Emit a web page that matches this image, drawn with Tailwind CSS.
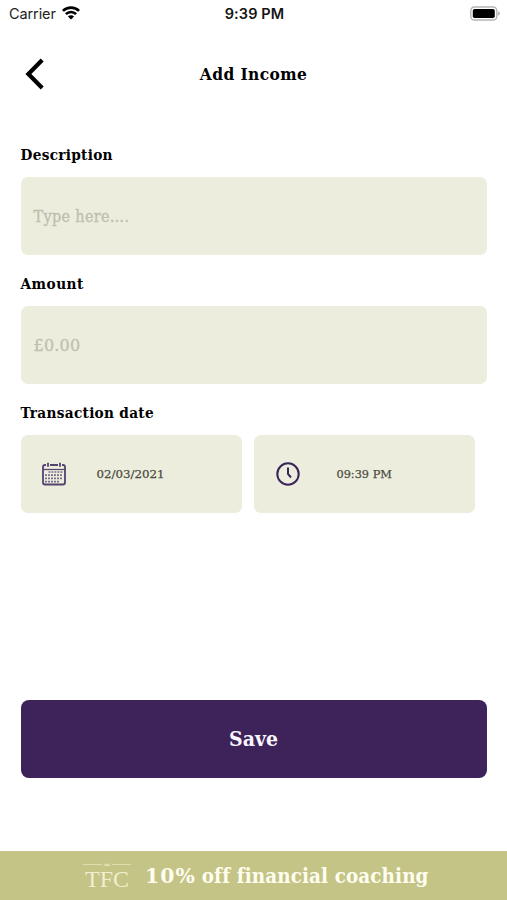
<!DOCTYPE html>
<html lang="en">
<head>
<meta charset="utf-8">
<title>Add Income</title>
<script src="https://cdn.jsdelivr.net/npm/@tailwindcss/browser@4"></script>
</head>
<body class="bg-white">
<div class="w-[507px] h-[900px] flex flex-col overflow-hidden font-['DejaVu_Serif_Condensed','DejaVu_Serif',serif] text-black whitespace-nowrap">
  <header class="h-7 shrink-0 grid grid-cols-3 items-center pl-[9px] pr-[7px] font-['Inter',sans-serif] text-[14.5px] leading-7">
    <div class="flex items-center gap-[6px] text-[#222]">
      <span class="tracking-[-0.1px]">Carrier</span>
      <svg class="w-[18px] h-[14px] -mt-[2px]" viewBox="0 0 18 14" fill="none" stroke="#000" stroke-width="2.7">
        <path d="M.9 4.9a11.5 11.5 0 0 1 16.2 0M3.9 8.1a7.2 7.2 0 0 1 10.2 0"/>
        <path d="M9 13.6 5.9 10.5a4.4 4.4 0 0 1 6.2 0z" fill="#000" stroke="none"/>
      </svg>
    </div>
    <span class="text-center font-semibold text-[#151515] tracking-[.1px]">9:39 PM</span>
    <svg class="w-[31px] h-[15px] justify-self-end -mt-[2px]" viewBox="0 0 31 15">
      <rect x="1.8" y="1" width="26" height="13" rx="3.6" fill="#fff" stroke="#b5b5b5" stroke-width="1.4"/>
      <rect x="3.8" y="3" width="22" height="9" rx="1.8" fill="#000"/>
      <path d="M29 5.2q2 .8 2 2.3t-2 2.3z" fill="#b5b5b5"/>
    </svg>
  </header>

  <div class="h-[94px] shrink-0 grid grid-cols-3 items-center px-[25px]">
    <svg class="w-[19px] h-[32px] -mt-[2px]" viewBox="0 0 19 32" fill="none" stroke="#000" stroke-width="4.2"><path d="M17.2 2 3.4 16l13.8 14"/></svg>
    <h1 class="text-center text-[17.2px] tracking-[.4px] font-bold">Add Income</h1>
  </div>

  <main class="flex flex-col px-[20.5px] pt-[21px]">
    <label class="h-[34px] leading-[25px] text-[15.2px] tracking-[.3px] font-bold">Description</label>
    <div class="h-[78px] rounded-[7px] bg-[#eceddc] pl-[13px] pt-[2px] flex items-center text-[16px] tracking-[.35px] text-[#bfbfb0] [-webkit-text-stroke:.35px_#bfbfb0]">Type here….</div>
    <label class="h-[51px] pt-[17px] leading-[25px] text-[15.2px] tracking-[.5px] font-bold">Amount</label>
    <div class="h-[78px] rounded-[7px] bg-[#eceddc] pl-[13px] pt-[2px] flex items-center font-['DejaVu_Serif',serif] text-[16px] tracking-[.2px] text-[#bfbfb0] [-webkit-text-stroke:.3px_#bfbfb0]">£0.00</div>
    <label class="h-[51px] pt-[17px] leading-[25px] text-[15.2px] tracking-[.3px] font-bold">Transaction date</label>
    <div class="flex gap-3 font-['DejaVu_Serif',serif] text-[#4b4b42] [-webkit-text-stroke:.25px_#4b4b42]">
      <div class="w-[221px] h-[78px] rounded-[7px] bg-[#eceddc] pl-[21px] flex items-center gap-[31px]">
        <svg class="w-6 h-6" viewBox="0 0 24 24" fill="none" stroke="#54426f">
          <path d="M4 3H3Q1 3 1 5v15.500q0 2 2 2h18q2 0 2-2V5q0-2-2-2h-1M8 3h8" stroke-width="1.8"/>
          <path d="M1 7.500h22" stroke-width="1.200"/>
          <path d="M6 .8v4M18 .8v4" stroke-width="1.800"/>
          <path d="M6.500 10H21M3 13.200h18M3 16.400h18M3 19.600h14" stroke-width="1.700" stroke-dasharray="1.900 1.100" stroke="#77698b"/>
        </svg>
        <span class="text-[11.8px] pt-[2px]">02/03/2021</span>
      </div>
      <div class="w-[221px] h-[78px] rounded-[7px] bg-[#eceddc] pl-[22px] flex items-center gap-[37px]">
        <svg class="w-6 h-6" viewBox="0 0 24 24" fill="none" stroke="#3c235c" stroke-width="2"><circle cx="12" cy="12" r="10.700"/><path d="M12 5.500V12l3 3.500"/></svg>
        <span class="text-[11.300px] pt-[2px]">09:39 PM</span>
      </div>
    </div>
    <button class="mt-[187px] h-[78px] rounded-[8px] bg-[#3d235a] text-[#faf5ff] text-[21px] font-bold">Save</button>
  </main>

  <footer class="mt-auto h-[49px] shrink-0 bg-[#c3c485] text-[#fffdf0] flex items-center pl-[83px] gap-[14px]">
    <div class="relative w-12 h-[30px] mt-[4px] font-['Liberation_Serif',serif] text-[#f0efd0] text-[24px] leading-[32px] text-center">
      <svg class="absolute left-0 top-0 w-12 h-4" viewBox="0 0 48 16" fill="none" stroke="#e4e3b9"><path d="M0 1.500h19M29 1.500h19" stroke-width=".8"/><path d="M21 0l2 2 1-2 1 2 2-2-.6 3h-4.800z" fill="#e4e3b9" stroke="none"/></svg>
      <span>TFC</span>
    </div>
    <div class="flex gap-[6px] pt-[2px] font-bold text-[20.400px]">
      <span class="font-['DejaVu_Serif',serif] tracking-[1px]">10%</span>
      <span class="tracking-[.12px]">off financial coaching</span>
    </div>
  </footer>
</div>
</body>
</html>
